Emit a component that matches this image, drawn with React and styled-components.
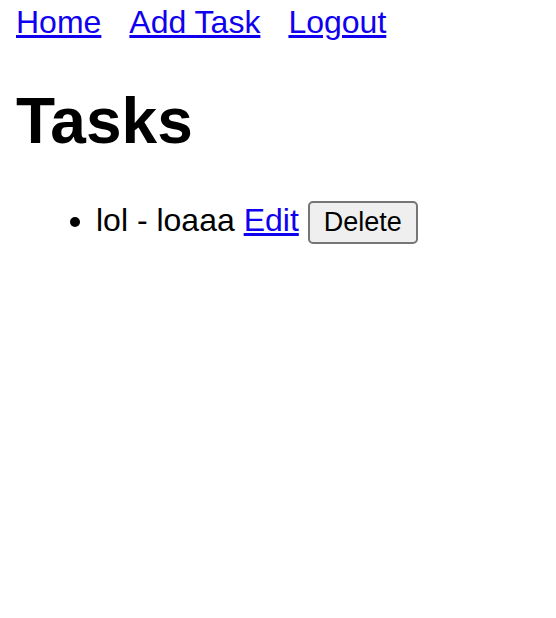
import React from "react";
import styled, { createGlobalStyle } from "styled-components";

const GlobalStyle = createGlobalStyle`
  body {
    margin: 0;
    background: #ffffff;
    color: #000000;
    font-family: "Liberation Sans", Arial, sans-serif;
    font-size: 32px;
    line-height: 36px;
  }
`;

const Page = styled.div`
  padding: 4px 16px;
`;

const Nav = styled.nav`
  display: flex;
  gap: 28px;
`;

const Link = styled.a`
  color: #1000f0;
  text-decoration: underline;
  text-decoration-thickness: 3px;
`;

const Title = styled.h1`
  margin: 45px 0 41px;
  font-size: 64px;
  line-height: 72px;
  font-weight: 700;
`;

const TaskList = styled.ul`
  margin: 0;
  padding-left: 80px;
`;

const TaskItem = styled.li`
  line-height: 44px;
`;

const DeleteButton = styled.button`
  box-sizing: border-box;
  height: 43px;
  padding: 0 14px;
  border: 2px solid #767676;
  border-radius: 5px;
  background: #efefef;
  color: #000000;
  font-family: inherit;
  font-size: 27px;
  line-height: 32px;
`;

const links = ["Home", "Add Task", "Logout"];
const tasks = [{ id: 1, title: "lol", description: "loaaa" }];

export default function App() {
  return (
    <Page>
      <GlobalStyle />
      <Nav>
        {links.map((label) => (
          <Link key={label} href="#">{label}</Link>
        ))}
      </Nav>
      <main>
        <Title>Tasks</Title>
        <TaskList>
          {tasks.map((task) => (
            <TaskItem key={task.id}>
              {task.title} - {task.description} <Link href="#">Edit</Link>{" "}
              <DeleteButton type="button">Delete</DeleteButton>
            </TaskItem>
          ))}
        </TaskList>
      </main>
    </Page>
  );
}
